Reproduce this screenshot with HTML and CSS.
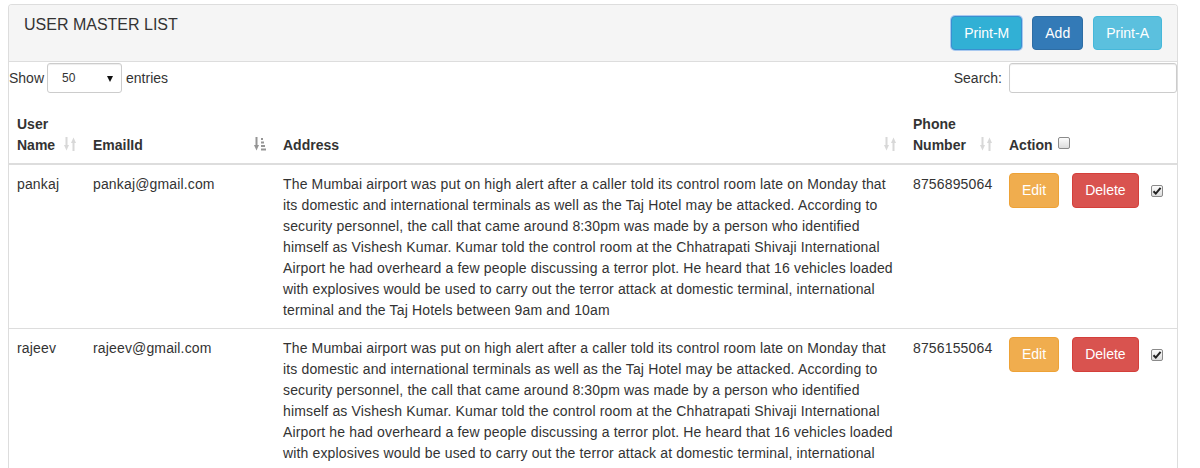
FILE: index.html
```html
<!DOCTYPE html>
<html lang="en">
<head>
<meta charset="utf-8">
<title>User Master List</title>
<link rel="stylesheet" href="styles.css">
</head>
<body>
<div class="page">
  <div class="panel">
    <div class="panel-heading">
      <h3 class="panel-title">USER MASTER LIST</h3>
      <div class="actions">
        <button class="btn btn-info btn-focus">Print-M</button>
        <button class="btn btn-primary">Add</button>
        <button class="btn btn-info">Print-A</button>
      </div>
    </div>
    <div class="panel-body">
      <div class="toolbar">
        <label class="length">Show
          <span class="select-wrap">
            <select class="select">
              <option>10</option>
              <option>25</option>
              <option selected>50</option>
              <option>100</option>
            </select>
            <span class="select-arrow"></span>
          </span>
          entries</label>
        <label class="search">Search:<input class="search-input" type="search"></label>
      </div>

      <table class="grid">
        <colgroup>
          <col class="c-name">
          <col class="c-email">
          <col class="c-addr">
          <col class="c-phone">
          <col class="c-action">
        </colgroup>
        <thead>
          <tr>
            <th class="sortable">User Name
              <svg class="sort-icon" viewBox="0 0 12 14" width="12" height="14"><rect x="1.5" y="0" width="2" height="9"/><polygon points="0,8 5,8 2.5,13.5"/><rect x="8.5" y="5" width="2" height="9"/><polygon points="7,6 12,6 9.5,0.5"/></svg>
            </th>
            <th class="sortable">EmailId
              <svg class="sort-icon asc" viewBox="0 0 12 14" width="12" height="14"><rect x="1.5" y="0" width="2" height="9"/><polygon points="0,8 5,8 2.5,13.5"/><rect x="7" y="1" width="2" height="2"/><rect x="7" y="4.5" width="3" height="2"/><rect x="7" y="8" width="4" height="2"/><rect x="7" y="11.5" width="5" height="2"/></svg>
            </th>
            <th class="sortable">Address
              <svg class="sort-icon" viewBox="0 0 12 14" width="12" height="14"><rect x="1.5" y="0" width="2" height="9"/><polygon points="0,8 5,8 2.5,13.5"/><rect x="8.5" y="5" width="2" height="9"/><polygon points="7,6 12,6 9.5,0.5"/></svg>
            </th>
            <th class="sortable">Phone Number
              <svg class="sort-icon" viewBox="0 0 12 14" width="12" height="14"><rect x="1.5" y="0" width="2" height="9"/><polygon points="0,8 5,8 2.5,13.5"/><rect x="8.5" y="5" width="2" height="9"/><polygon points="7,6 12,6 9.5,0.5"/></svg>
            </th>
            <th>Action <span class="check head-check"></span></th>
          </tr>
        </thead>
        <tbody>
          <tr>
            <td>pankaj</td>
            <td>pankaj@gmail.com</td>
            <td>The Mumbai airport was put on high alert after a caller told its control room late on Monday that its domestic and international terminals as well as the Taj Hotel may be attacked. According to security personnel, the call that came around 8:30pm was made by a person who identified himself as Vishesh Kumar. Kumar told the control room at the Chhatrapati Shivaji International Airport he had overheard a few people discussing a terror plot. He heard that 16 vehicles loaded with explosives would be used to carry out the terror attack at domestic terminal, international terminal and the Taj Hotels between 9am and 10am</td>
            <td>8756895064</td>
            <td>
              <div class="row-actions">
                <button class="btn btn-warning">Edit</button>
                <button class="btn btn-danger">Delete</button>
                <span class="check checked"><svg viewBox="0 0 12 12" width="12" height="12"><path d="M2.5 6.2 L4.8 8.6 L9.6 2.8" /></svg></span>
              </div>
            </td>
          </tr>
          <tr>
            <td>rajeev</td>
            <td>rajeev@gmail.com</td>
            <td>The Mumbai airport was put on high alert after a caller told its control room late on Monday that its domestic and international terminals as well as the Taj Hotel may be attacked. According to security personnel, the call that came around 8:30pm was made by a person who identified himself as Vishesh Kumar. Kumar told the control room at the Chhatrapati Shivaji International Airport he had overheard a few people discussing a terror plot. He heard that 16 vehicles loaded with explosives would be used to carry out the terror attack at domestic terminal, international terminal and the Taj Hotels between 9am and 10am</td>
            <td>8756155064</td>
            <td>
              <div class="row-actions">
                <button class="btn btn-warning">Edit</button>
                <button class="btn btn-danger">Delete</button>
                <span class="check checked"><svg viewBox="0 0 12 12" width="12" height="12"><path d="M2.5 6.2 L4.8 8.6 L9.6 2.8" /></svg></span>
              </div>
            </td>
          </tr>
        </tbody>
      </table>
    </div>
  </div>
</div>
</body>
</html>
```

FILE: styles.css
```css
* { box-sizing: border-box; }

html, body {
  margin: 0;
  padding: 0;
  background: #fff;
}

body {
  font-family: "Liberation Sans", Arial, sans-serif;
  font-size: 14px;
  line-height: 1.5;
  color: #333;
}

.page {
  padding: 4px 0 0 8px;
}

.panel {
  width: 1170px;
  border: 1px solid #ddd;
  border-bottom: none;
  border-radius: 4px 4px 0 0;
  background: #fff;
}

.panel-heading {
  display: flex;
  justify-content: space-between;
  align-items: flex-start;
  padding: 10px 15px 11px 15px;
  background: #f5f5f5;
  border-bottom: 1px solid #ddd;
  border-radius: 3px 3px 0 0;
}

.panel-title {
  margin: 0;
  font-size: 16px;
  font-weight: normal;
  line-height: 20px;
  color: #333;
}

.actions {
  display: flex;
  gap: 10px;
  margin-top: 1px;
}

.btn {
  font-family: inherit;
  font-size: 14px;
  line-height: 20px;
  padding: 6px 12px;
  border: 1px solid transparent;
  border-radius: 4px;
  color: #fff;
  cursor: pointer;
  white-space: nowrap;
}

.btn-info { background: #5bc0de; border-color: #46b8da; }
.btn-focus { background: #31b0d5; border-color: #3a8fd0; box-shadow: 0 0 0 1px #a9c9f0; }
.btn-primary { background: #337ab7; border-color: #2e6da4; }
.btn-warning { background: #f0ad4e; border-color: #eea236; }
.btn-danger { background: #d9534f; border-color: #d43f3a; }

.toolbar {
  display: flex;
  justify-content: space-between;
  align-items: center;
  padding-top: 1px;
  height: 31px;
}

.length, .search {
  display: flex;
  align-items: center;
  font-weight: normal;
  white-space: nowrap;
}

.select-wrap {
  position: relative;
  display: inline-block;
  margin: 0 4px 0 3px;
}

.select {
  -webkit-appearance: none;
  appearance: none;
  width: 75px;
  height: 30px;
  padding: 0 0 0 14px;
  font-family: inherit;
  font-size: 12px;
  color: #333;
  background: #fff;
  border: 1px solid #ccc;
  border-radius: 3px;
  box-shadow: inset 0 1px 1px rgba(0,0,0,.075);
}

.select-arrow {
  position: absolute;
  right: 9px;
  top: 13px;
  width: 0;
  height: 0;
  border-left: 3.5px solid transparent;
  border-right: 3.5px solid transparent;
  border-top: 6px solid #111;
  pointer-events: none;
}

.search-input {
  margin-left: 7px;
  width: 168px;
  height: 30px;
  padding: 5px 10px;
  font-family: inherit;
  font-size: 12px;
  border: 1px solid #ccc;
  border-radius: 3px;
  box-shadow: inset 0 1px 1px rgba(0,0,0,.075);
}

.grid {
  width: 100%;
  margin-top: 12px;
  border-collapse: collapse;
  table-layout: fixed;
}

.c-name { width: 76px; }
.c-email { width: 190px; }
.c-addr { width: 630px; }
.c-phone { width: 96px; }
.c-action { width: 176px; }

.grid th {
  position: relative;
  text-align: left;
  vertical-align: bottom;
  font-weight: bold;
  line-height: 21px;
  padding: 9px 8px 7px 8px;
  border-bottom: 2px solid #ddd;
}

.grid th.sortable {
  padding-right: 30px;
}

.sort-icon {
  position: absolute;
  right: 9px;
  bottom: 12px;
  fill: #d8d8d8;
}

.sort-icon.asc {
  fill: #959595;
}

.grid td {
  vertical-align: top;
  line-height: 21px;
  letter-spacing: 0.15px;
  padding: 9px 8px 7px 8px;
  border-top: 1px solid #ddd;
}

.grid tbody tr:first-child td {
  border-top: none;
}

.row-actions {
  display: flex;
  align-items: center;
  margin-top: -1px;
  letter-spacing: 0;
}

.row-actions .btn {
  line-height: 21px;
}

.row-actions .btn-danger {
  margin-left: 13px;
}

.check {
  display: inline-block;
  width: 12px;
  height: 12px;
  border: 1px solid #8a8a8a;
  border-radius: 2px;
  background: linear-gradient(#fcfcfc, #dcdcdc);
  vertical-align: 1px;
}

.head-check {
  margin-left: 2px;
}

.check.checked {
  margin-left: 12px;
  position: relative;
}

.check.checked svg {
  position: absolute;
  left: -1px;
  top: -1px;
  fill: none;
  stroke: #222;
  stroke-width: 2;
}
```
